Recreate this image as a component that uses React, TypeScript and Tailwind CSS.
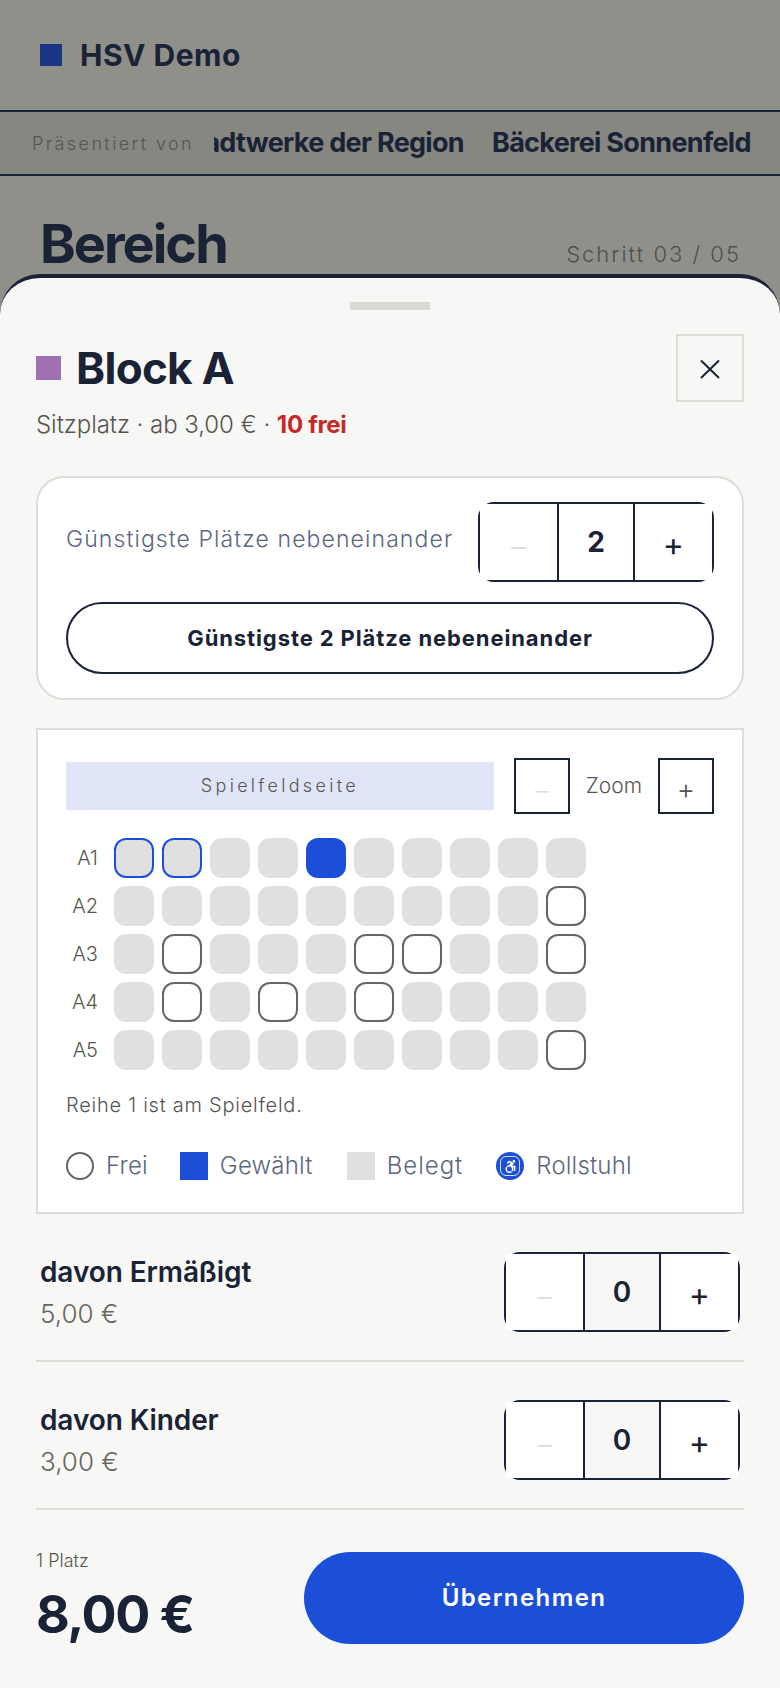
import { FaAccessibleIcon } from "react-icons/fa";

const navy = "text-[#1a2236]";

// 0 = belegt, 1 = frei, 2 = gewählt, 3 = belegt mit blauem Rand
const rows: { label: string; seats: number[] }[] = [
  { label: "A1", seats: [3, 3, 0, 0, 2, 0, 0, 0, 0, 0] },
  { label: "A2", seats: [0, 0, 0, 0, 0, 0, 0, 0, 0, 1] },
  { label: "A3", seats: [0, 1, 0, 0, 0, 1, 1, 0, 0, 1] },
  { label: "A4", seats: [0, 1, 0, 1, 0, 1, 0, 0, 0, 0] },
  { label: "A5", seats: [0, 0, 0, 0, 0, 0, 0, 0, 0, 1] },
];

function Seat({ state }: { state: number }) {
  if (state === 1) return <div className="h-10 w-10 rounded-xl border-2 border-[#666660] bg-white" />;
  if (state === 2) return <div className="h-10 w-10 rounded-xl bg-[#1c4fd8]" />;
  if (state === 3) return <div className="h-10 w-10 rounded-xl border-2 border-[#1c4fd8] bg-[#e0e0e0]" />;
  return <div className="h-10 w-10 rounded-xl bg-[#e0e0e0]" />;
}

function Stepper({ value, bold }: { value: number; bold?: boolean }) {
  return (
    <div className="grid h-20 w-[236px] shrink-0 grid-cols-3 rounded-2xl border-2 border-[#1a2236]">
      <button className="flex items-center justify-center bg-white pt-2 text-[30px] font-light text-[#dcdcd8]">–</button>
      <div className={`flex items-center justify-center border-x-2 border-[#1a2236] text-[28px] ${navy} ${bold ? "font-bold" : "font-semibold"}`}>
        {value}
      </div>
      <button className={`flex items-center justify-center bg-white pt-1.5 text-[32px] font-normal ${navy}`}>+</button>
    </div>
  );
}

function TicketRow({ name, price }: { name: string; price: string }) {
  return (
    <div className="flex items-center justify-between border-b-2 border-[#dcdcd8] px-1 pt-[38px] pb-7">
      <div>
        <div className={`text-[28px] leading-9 font-semibold tracking-[-0.1px] ${navy}`}>{name}</div>
        <div className="mt-2 text-[26px] leading-8 font-light text-[#666660]">{price}</div>
      </div>
      <Stepper value={0} />
    </div>
  );
}

export default function App() {
  return (
    <div
      className="relative h-[1688px] w-[780px] overflow-hidden bg-[#8f908a]"
      style={{ fontFamily: "Inter, 'Noto Sans', sans-serif" }}
    >
      {/* Header */}
      <div className="flex h-[110px] items-center gap-[18px] pl-10">
        <div className="h-[22px] w-[22px] bg-[#1a3585]" />
        <span className={`text-[30px] font-bold tracking-[0.5px] ${navy}`}>HSV Demo</span>
      </div>

      {/* Sponsoren */}
      <div className="flex h-[66px] items-center border-y-2 border-[#1a2236] bg-[#868780] pl-8 pr-6">
        <span className="shrink-0 pt-0.5 text-lg font-light tracking-[2.4px] text-[#55564f]">Präsentiert von</span>
        <div className="ml-5 min-w-0 flex-1 overflow-hidden">
          <div className={`-ml-[36px] flex gap-7 whitespace-nowrap text-[27px] font-bold tracking-[-0.7px] ${navy}`}>
            <span>Stadtwerke der Region</span>
            <span>Bäckerei Sonnenfeld</span>
          </div>
        </div>
      </div>

      {/* Titel */}
      <div className="flex items-end justify-between pl-10 pr-[39px] pt-[34px]">
        <h1 className={`text-[54px] leading-[68px] font-bold tracking-[-2px] ${navy}`}>Bereich</h1>
        <span className="pb-[7px] text-[22px] font-light tracking-[2px] text-[#4f504c]">Schritt 03 / 05</span>
      </div>

      {/* Bottom sheet */}
      <div className="absolute inset-x-0 bottom-0 h-[1414px] rounded-t-[40px] border-t-4 border-[#1a2236] bg-[#f7f7f5] px-9 pt-6">
        <div className="mx-auto h-2 w-20 bg-[#d9d9d6]" />

        <div className="mt-6 flex items-center justify-between">
          <div className="flex items-center gap-[15px]">
            <div className="h-6 w-[25px] bg-[#a070b0]" />
            <span className={`text-[44px] font-bold tracking-[-0.7px] ${navy}`}>Block A</span>
          </div>
          <button className={`flex h-[68px] w-[68px] items-center justify-center border-2 border-[#dcdcd8] pt-0.5 ${navy}`}>
            <svg width="22" height="22" viewBox="0 0 22 22" fill="none" stroke="currentColor" strokeWidth="2">
              <path d="M2 2.5 20 20M20 2.5 2 20" />
            </svg>
          </button>
        </div>

        <p className="mt-2 text-2xl leading-[30px] font-light tracking-[-0.05px] text-[#55564f]">
          Sitzplatz · ab 3,00 € · <span className="font-bold tracking-[-0.3px] text-[#c62828]">10 frei</span>
        </p>

        {/* Schnellauswahl */}
        <div className="mt-9 rounded-[28px] border-2 border-[#dcdcd8] bg-white px-7 py-6">
          <div className="flex items-center justify-between">
            <span className="mb-1.5 text-[23px] font-light tracking-[1.1px] text-[#5c677d]">Günstigste Plätze nebeneinander</span>
            <Stepper value={2} bold />
          </div>
          <button className={`mt-5 h-[72px] w-full rounded-full border-2 border-[#1a2236] text-[22px] font-bold tracking-[0.9px] ${navy}`}>
            Günstigste 2 Plätze nebeneinander
          </button>
        </div>

        {/* Saalplan */}
        <div className="mt-7 border-2 border-[#dcdcd8] bg-white px-7 pt-7 pb-8">
          <div className="flex items-center">
            <div className="flex h-12 flex-1 items-center justify-center bg-[#dfe5f7] text-lg font-light tracking-[3.3px] text-[#55564f]">
              Spielfeldseite
            </div>
            <button className="ml-5 flex h-14 w-14 items-center justify-center border-2 border-[#1a2236] pt-2 text-[26px] font-light text-[#dcdcd8]">–</button>
            <span className="mx-4 text-[21px] font-light text-[#55564f]">Zoom</span>
            <button className="flex h-14 w-14 items-center justify-center border-2 border-[#1a2236] pt-1.5 text-[28px] font-light text-[#55564f]">+</button>
          </div>

          <div className="mt-6 flex flex-col gap-2">
            {rows.map((row) => (
              <div key={row.label} className="flex items-center">
                <span className="w-8 text-right text-xl font-light text-[#55564f]">{row.label}</span>
                <div className="ml-4 flex gap-2">
                  {row.seats.map((s, i) => (
                    <Seat key={i} state={s} />
                  ))}
                </div>
              </div>
            ))}
          </div>

          <p className="mt-[22px] text-[20px] leading-[26px] font-light tracking-[0.75px] text-[#55564f]">Reihe 1 ist am Spielfeld.</p>

          <div className="mt-[34px] flex h-7 items-center gap-[33px] text-2xl font-light tracking-[0.2px] text-[#5c677d]">
            <div className="flex items-center gap-3">
              <div className="h-7 w-7 rounded-full border-2 border-[#666660]" />
              <span>Frei</span>
            </div>
            <div className="-ml-px flex items-center gap-3">
              <div className="h-7 w-7 bg-[#1c4fd8]" />
              <span>Gewählt</span>
            </div>
            <div className="ml-px flex items-center gap-3">
              <div className="h-7 w-7 bg-[#e0e0e0]" />
              <span className="tracking-[1px]">Belegt</span>
            </div>
            <div className="flex items-center gap-3">
              <div className="flex h-7 w-7 items-center justify-center rounded-full bg-[#1c4fd8] text-white">
                <div className="flex h-5 w-5 items-center justify-center rounded-md border border-white/80">
                  <FaAccessibleIcon size={13} />
                </div>
              </div>
              <span>Rollstuhl</span>
            </div>
          </div>
        </div>

        {/* Ticketarten */}
        <TicketRow name="davon Ermäßigt" price="5,00 €" />
        <TicketRow name="davon Kinder" price="3,00 €" />

        {/* Footer */}
        <div className="mt-[42px] flex items-start justify-between">
          <div>
            <div className="text-lg leading-[18px] font-light text-[#55564f]">1 Platz</div>
            <div className={`mt-3.5 text-[52px] leading-[62px] font-bold tracking-[-1.5px] ${navy}`}>8,00 €</div>
          </div>
          <button className="h-[92px] w-[440px] rounded-full bg-[#1c4fd8] text-2xl font-semibold tracking-[1.4px] text-white">
            Übernehmen
          </button>
        </div>
      </div>
    </div>
  );
}
